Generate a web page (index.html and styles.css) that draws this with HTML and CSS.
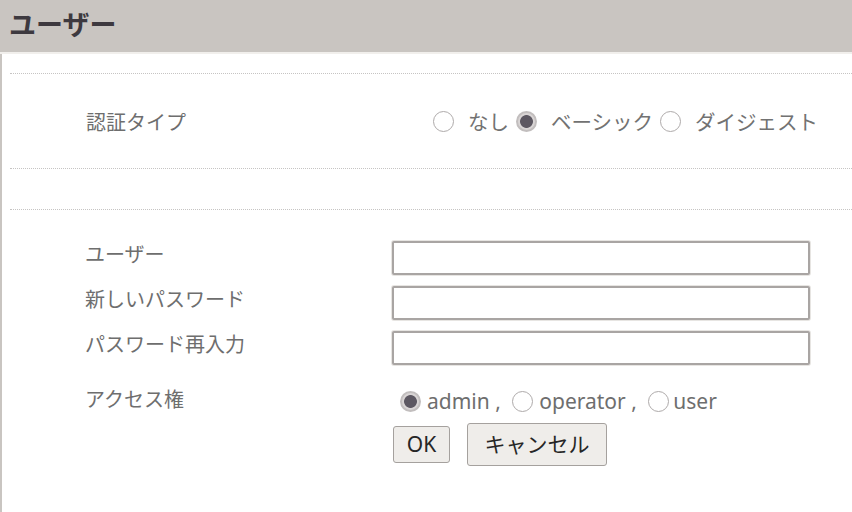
FILE: index.html
```html
<!DOCTYPE html>
<html lang="ja">
<head>
<meta charset="utf-8">
<title>ユーザー</title>
<link rel="stylesheet" href="styles.css">
</head>
<body>
<header class="titlebar"><h1 class="title">ユーザー</h1></header>
<main class="panel">
  <div class="rule"></div>
  <div class="auth-row">
    <span class="auth-label">認証タイプ</span>
    <div class="auth-options">
      <label class="opt"><input type="radio" name="auth" class="radio">なし</label>
      <label class="opt"><input type="radio" name="auth" class="radio" checked>ベーシック</label>
      <label class="opt"><input type="radio" name="auth" class="radio">ダイジェスト</label>
    </div>
  </div>
  <div class="rule"></div>
  <div class="spacer"></div>
  <div class="rule"></div>
  <form class="form">
    <div class="row">
      <span class="label">ユーザー</span>
      <input type="text" class="field">
    </div>
    <div class="row row-next">
      <span class="label">新しいパスワード</span>
      <input type="password" class="field">
    </div>
    <div class="row row-next">
      <span class="label">パスワード再入力</span>
      <input type="password" class="field">
    </div>
    <div class="row row-access">
      <span class="label">アクセス権</span>
      <div class="access">
        <input type="radio" name="acc" class="radio radio-acc" checked><span>admin , </span>
        <input type="radio" name="acc" class="radio radio-acc"><span>operator , </span>
        <input type="radio" name="acc" class="radio radio-acc radio-last"><span>user</span>
      </div>
    </div>
    <div class="row row-buttons">
      <span class="label"></span>
      <div class="buttons">
        <button type="button" class="btn btn-ok">OK</button>
        <button type="button" class="btn btn-cancel">キャンセル</button>
      </div>
    </div>
  </form>
</main>
</body>
</html>
```

FILE: styles.css
```css
html, body {
  margin: 0;
  padding: 0;
  background: #ffffff;
}
body {
  font-family: "Noto Sans", "Noto Sans CJK JP", sans-serif;
  color: #6e6e6e;
  width: 852px;
  height: 512px;
  overflow: hidden;
}
.titlebar {
  height: 52px;
  background: #c9c5c1;
  border-bottom: 2px solid #f1efec;
  display: flex;
  align-items: center;
  padding-left: 9px;
}
.title {
  margin: 0;
  font-size: 27px;
  font-weight: 700;
  color: #3d393f;
  line-height: 1;
  position: relative;
  top: -2px;
}
.panel {
  border-left: 2px solid #c9c5c1;
  padding: 19px 0 0 8px;
  height: 439px;
}
.rule {
  border-top: 1px dotted #c6c4c3;
  height: 0;
}
.auth-row {
  height: 94px;
  display: flex;
  align-items: center;
  padding-left: 76px;
}
.auth-label {
  width: 347px;
  font-size: 20px;
  flex: none;
}
.auth-options {
  display: flex;
  align-items: center;
  font-size: 20.5px;
  color: #727272;
}
.opt {
  display: flex;
  align-items: center;
  margin-right: 7px;
}
.radio {
  appearance: none;
  -webkit-appearance: none;
  width: 21px;
  height: 21px;
  margin: 0 14px 0 0;
  border-radius: 50%;
  border: 1.5px solid #aeaaaa;
  background: #ffffff;
  box-sizing: border-box;
  flex: none;
}
.radio:checked {
  border: 2px solid #c2bebe;
  background: radial-gradient(circle, #5d5862 0 6px, #d9d5d5 6.8px);
}
.spacer {
  height: 40px;
}
.form {
  margin: 0;
  padding: 31px 0 0 75px;
}
.row {
  display: flex;
  align-items: flex-start;
}
.row-next {
  margin-top: 11px;
}
.label {
  width: 307px;
  flex: none;
  font-size: 20px;
  line-height: 28px;
}
.field {
  width: 418px;
  height: 34px;
  box-sizing: border-box;
  margin: 0;
  border: 2px solid #a9a5a3;
  border-radius: 2px;
  box-shadow: 0 0 0 1px #e7e5e2;
  background: #ffffff;
  font-size: 18px;
}
.row-access {
  margin-top: 21px;
  height: 30px;
}
.access {
  display: flex;
  align-items: center;
  height: 30px;
  font-size: 21px;
  color: #6e6e6e;
  padding-left: 8px;
  white-space: pre;
}
.radio-acc {
  margin: 0 6px 0 6px;
}
.radio-acc:first-child {
  margin-left: 0;
}
.radio-last {
  margin-right: 4px;
}
.row-buttons {
  margin-top: 7px;
}
.buttons {
  display: flex;
  align-items: center;
  height: 43px;
  gap: 17px;
  padding-left: 1px;
}
.btn {
  font-family: "Noto Sans", "Noto Sans CJK JP", sans-serif;
  font-size: 21px;
  color: #262626;
  background: #efedea;
  border: 1.5px solid #a5a19e;
  border-radius: 3px;
  margin: 0;
  line-height: 1;
  box-sizing: border-box;
}
.btn-ok {
  height: 37px;
  width: 57px;
  padding: 0;
}
.btn-cancel {
  height: 43px;
  width: 140px;
  padding: 0;
}
```
